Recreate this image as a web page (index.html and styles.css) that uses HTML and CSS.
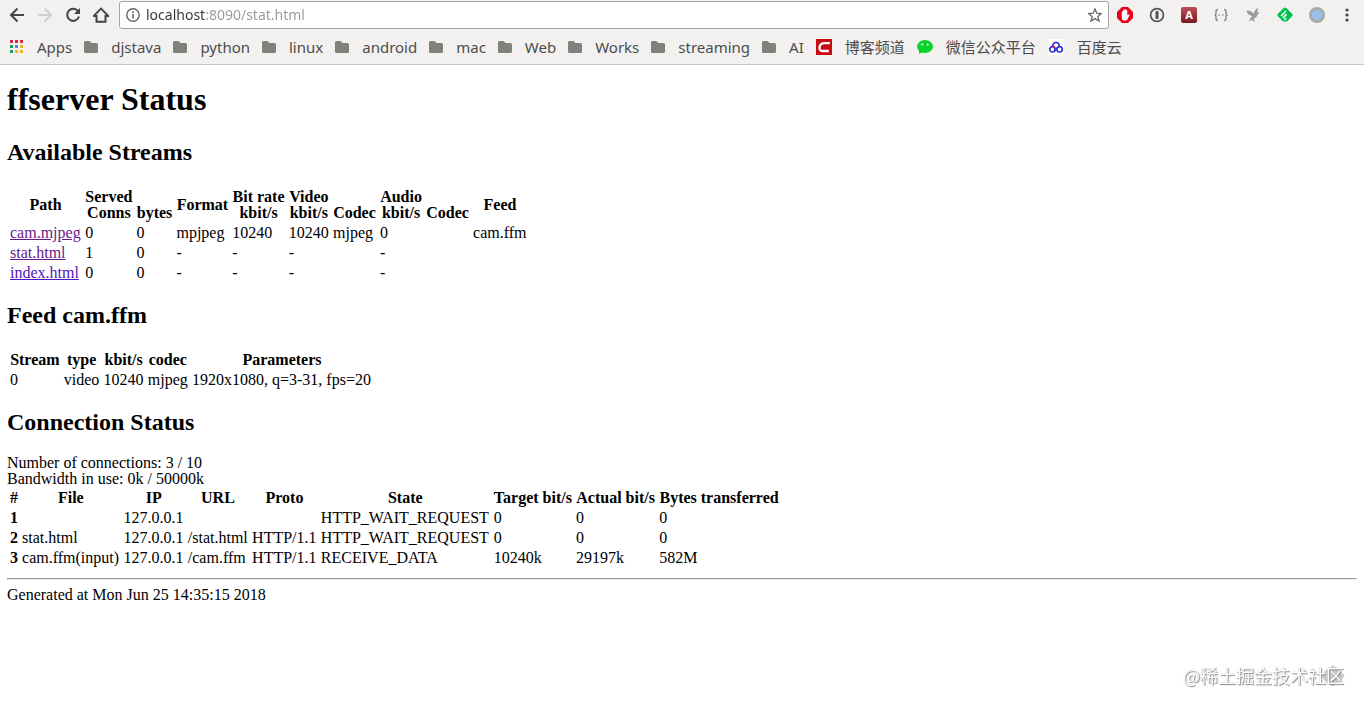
FILE: index.html
```html
<!DOCTYPE html>
<html lang="en">
<head>
    <meta charset="UTF-8">
    <title>ffserver Status</title>
    <link rel="stylesheet" href="styles.css">
</head>
<body>
    <svg class="symbols" aria-hidden="true">
        <symbol id="folder" viewBox="0 0 14 12">
            <path d="M1.500 0H5.500L7.500 2H12.500Q14 2 14 3.500V10.500Q14 12 12.500 12H1.500Q0 12 0 10.500V1.500Q0 0 1.500 0Z" fill="#82807d"/>
        </symbol>
    </svg>

    <header class="browser">
        <div class="toolbar">
            <nav class="nav-buttons">
                <button type="button" aria-label="Back">
                    <svg width="16" height="16" viewBox="0 0 16 16" fill="none" stroke="#454545" stroke-width="2"><path d="M15 8H2M8.500 1.500L2 8L8.500 14.500"/></svg>
                </button>
                <button type="button" aria-label="Forward">
                    <svg width="16" height="16" viewBox="0 0 16 16" fill="none" stroke="#cfcfce" stroke-width="2"><path d="M1 8H14M7.500 1.500L14 8L7.500 14.500"/></svg>
                </button>
                <button type="button" aria-label="Reload">
                    <svg width="16" height="16" viewBox="0 0 16 16"><path d="M13 4.200A6 6 0 1 0 14 9.500" fill="none" stroke="#454545" stroke-width="2"/><path d="M15 1V7H9Z" fill="#454545"/></svg>
                </button>
                <button type="button" aria-label="Home">
                    <svg width="16" height="16" viewBox="0 0 16 16" fill="none" stroke="#454545" stroke-width="2"><path d="M.6 9H3.500V14.800H12.500V9H15.400L8 1.600Z"/></svg>
                </button>
            </nav>

            <div class="address">
                <svg width="14" height="14" viewBox="0 0 14 14"><circle cx="7" cy="7" r="6.200" fill="none" stroke="#666" stroke-width="1.400"/><path d="M7 6V10.500M7 3.300V4.900" stroke="#666" stroke-width="1.600"/></svg>
                <input type="text" class="url" aria-label="Address" value="localhost:8090/stat.html">
                <button type="button" aria-label="Bookmark this page">
                    <svg width="14" height="14" viewBox="0 0 14 14"><path d="M7 1L8.800 5.200L13.300 5.500L9.900 8.500L11 13L7 10.600L3 13L4.100 8.500L.7 5.500L5.200 5.200Z" fill="none" stroke="#666" stroke-width="1.300"/></svg>
                </button>
            </div>

            <div class="extensions">
                <button type="button" aria-label="Ad blocker">
                    <svg width="16" height="16" viewBox="0 0 16 16"><path d="M5 0H11L16 5V11L11 16H5L0 11V5Z" fill="#e8001a"/><path d="M4.800 8V4.500Q5.500 3.800 6.100 4.500V3Q6.800 2.200 7.500 3V2.400Q8.200 1.700 8.900 2.400V3.200Q9.600 2.500 10.300 3.200V8.500L11.800 7.300Q12.700 7.400 12.500 8.200L10.300 12.500Q9.700 13.500 8.500 13.500H7Q4.800 13.500 4.800 11Z" fill="#fff"/></svg>
                </button>
                <button type="button" aria-label="Password manager">
                    <svg width="16" height="16" viewBox="0 0 16 16"><circle cx="8" cy="8" r="6.400" fill="none" stroke="#555" stroke-width="1.700"/><rect x="6.500" y="4" width="3" height="8" rx="1" fill="#555"/></svg>
                </button>
                <button type="button" class="ext-a">A</button>
                <button type="button" aria-label="JSON formatter">
                    <svg width="16" height="16" viewBox="0 0 16 16"><path d="M5 2.500Q3 2.500 3 4.500V6.500Q3 8 1.500 8Q3 8 3 9.500V11.500Q3 13.500 5 13.500M11 2.500Q13 2.500 13 4.500V6.500Q13 8 14.500 8Q13 8 13 9.500V11.500Q13 13.500 11 13.500" fill="none" stroke="#888" stroke-width="1.400"/><path d="M5.500 8h1.500M9 8h1.500" stroke="#999" stroke-width="1.400"/></svg>
                </button>
                <button type="button" aria-label="Bird">
                    <svg width="16" height="16" viewBox="0 0 16 16"><path d="M1.500 3.500Q6 3.200 8.500 6.500Q9.500 3 13 .5Q12.300 3.500 12.500 5.500L15 5.800L12.500 7.500Q11.800 11 8.500 11.800L10 15L6.500 13L3.500 14.500L5.500 11Q7 10 7 9Q2.500 8 1.500 3.500Z" fill="#9b9b9b"/></svg>
                </button>
                <button type="button" aria-label="Reader">
                    <svg width="16" height="16" viewBox="0 0 16 16"><path d="M8 .5Q8.700 .5 9.300 1L15.300 7Q16 8 15.300 9L11 13.500Q10 14.500 9 14.500H7Q6 14.500 5 13.500L.7 9Q0 8 .7 7L6.700 1Q7.300 .5 8 .5Z" fill="#00c24e"/><path d="M4.500 8.500L8.500 4.500M6.300 10.500L9 7.800M8 12.300L8.600 11.700" stroke="#fff" stroke-width="1.700" stroke-linecap="round"/></svg>
                </button>
                <button type="button" aria-label="Recorder">
                    <svg width="16" height="16" viewBox="0 0 16 16"><circle cx="8" cy="8" r="8" fill="#aaa"/><circle cx="8" cy="8" r="5" fill="#94c1ed"/></svg>
                </button>
                <button type="button" aria-label="Menu">
                    <svg width="16" height="16" viewBox="0 0 16 16" fill="#454545"><circle cx="6" cy="3" r="1.600"/><circle cx="6" cy="8" r="1.600"/><circle cx="6" cy="13" r="1.600"/></svg>
                </button>
            </div>
        </div>

        <nav class="bookmarks">
            <a href="#">
                <svg width="14" height="14" viewBox="0 0 14 14"><path d="M0 0h3v3H0zM5 0h3v3H5zM10 0h3v3h-3z" fill="#d9273d"/><path d="M0 5h3v3H0zM0 10h3v3H0z" fill="#17a05d"/><path d="M5 5h3v3H5z" fill="#4285f4"/><path d="M5 10h3v3H5zM10 5h3v3h-3zM10 10h3v3h-3z" fill="#f0b51f"/></svg>
                Apps
            </a>
            <a href="#"><svg width="14" height="12"><use href="#folder"/></svg>djstava</a>
            <a href="#"><svg width="14" height="12"><use href="#folder"/></svg>python</a>
            <a href="#"><svg width="14" height="12"><use href="#folder"/></svg>linux</a>
            <a href="#"><svg width="14" height="12"><use href="#folder"/></svg>android</a>
            <a href="#"><svg width="14" height="12"><use href="#folder"/></svg>mac</a>
            <a href="#"><svg width="14" height="12"><use href="#folder"/></svg>Web</a>
            <a href="#"><svg width="14" height="12"><use href="#folder"/></svg>Works</a>
            <a href="#"><svg width="14" height="12"><use href="#folder"/></svg>streaming</a>
            <a href="#"><svg width="14" height="12"><use href="#folder"/></svg>AI</a>
            <a href="#">
                <svg width="16" height="16" viewBox="0 0 16 16"><rect width="16" height="16" fill="#c80b10"/><path d="M13.800 4.200H9Q4 4.200 3.500 8.500Q3.300 12 6.500 12H12.800" fill="none" stroke="#fff" stroke-width="2.300"/></svg>
                博客频道
            </a>
            <a href="#">
                <svg width="16" height="16" viewBox="0 0 16 16"><ellipse cx="8" cy="7.500" rx="8" ry="6.500" fill="#09d32c"/><path d="M2 11L2 15L6 13Z" fill="#09d32c"/><circle cx="5.300" cy="5.500" r="1" fill="#fff"/><circle cx="10.700" cy="5.500" r="1" fill="#fff"/></svg>
                微信公众平台
            </a>
            <a href="#">
                <svg width="16" height="16" viewBox="0 0 16 16"><rect width="16" height="16" fill="#fff"/><g fill="none" stroke="#3535dd" stroke-width="1.700"><path d="M5 7.200A3.100 3.100 0 1 1 11 7.200"/><circle cx="4.400" cy="10.300" r="2.700"/><circle cx="11.600" cy="10.300" r="2.700"/><path d="M6.300 12.200L9.800 8.300"/></g><circle cx="6.300" cy="7.800" r="1" fill="#e33"/></svg>
                百度云
            </a>
        </nav>
    </header>

    <main>
        <h1>ffserver Status</h1>

        <h2>Available Streams</h2>
        <table class="streams">
            <tr>
                <th>Path</th>
                <th>Served<br>Conns</th>
                <th><br>bytes</th>
                <th>Format</th>
                <th>Bit rate<br>kbit/s</th>
                <th>Video<br>kbit/s</th>
                <th><br>Codec</th>
                <th>Audio<br>kbit/s</th>
                <th><br>Codec</th>
                <th>Feed</th>
            </tr>
            <tr>
                <td><a href="#">cam.mjpeg</a></td>
                <td>0</td>
                <td>0</td>
                <td>mpjpeg</td>
                <td>10240</td>
                <td>10240</td>
                <td>mjpeg</td>
                <td>0</td>
                <td></td>
                <td>cam.ffm</td>
            </tr>
            <tr>
                <td><a href="#">stat.html</a></td>
                <td>1</td>
                <td>0</td>
                <td>-</td>
                <td>-</td>
                <td>-</td>
                <td></td>
                <td>-</td>
                <td></td>
                <td></td>
            </tr>
            <tr>
                <td><a href="#" class="recent">index.html</a></td>
                <td>0</td>
                <td>0</td>
                <td>-</td>
                <td>-</td>
                <td>-</td>
                <td></td>
                <td>-</td>
                <td></td>
                <td></td>
            </tr>
        </table>

        <h2>Feed cam.ffm</h2>
        <table class="feed">
            <tr>
                <th>Stream</th>
                <th>type</th>
                <th>kbit/s</th>
                <th>codec</th>
                <th>Parameters</th>
            </tr>
            <tr>
                <td>0</td>
                <td>video</td>
                <td>10240</td>
                <td>mjpeg</td>
                <td>1920x1080, q=3-31, fps=20</td>
            </tr>
        </table>

        <h2 class="status-title">Connection Status</h2>
        Number of connections: 3 / 10<br>
        Bandwidth in use: 0k / 50000k<br>
        <table class="connections">
            <tr>
                <th>#</th>
                <th>File</th>
                <th>IP</th>
                <th>URL</th>
                <th>Proto</th>
                <th>State</th>
                <th>Target bit/s</th>
                <th>Actual bit/s</th>
                <th>Bytes transferred</th>
            </tr>
            <tr>
                <td><b>1</b></td>
                <td></td>
                <td>127.0.0.1</td>
                <td></td>
                <td></td>
                <td>HTTP_WAIT_REQUEST</td>
                <td>0</td>
                <td>0</td>
                <td>0</td>
            </tr>
            <tr>
                <td><b>2</b></td>
                <td>stat.html</td>
                <td>127.0.0.1</td>
                <td>/stat.html</td>
                <td>HTTP/1.1</td>
                <td>HTTP_WAIT_REQUEST</td>
                <td>0</td>
                <td>0</td>
                <td>0</td>
            </tr>
            <tr>
                <td><b>3</b></td>
                <td>cam.ffm(input)</td>
                <td>127.0.0.1</td>
                <td>/cam.ffm</td>
                <td>HTTP/1.1</td>
                <td>RECEIVE_DATA</td>
                <td>10240k</td>
                <td>29197k</td>
                <td>582M</td>
            </tr>
        </table>
        <hr>
        Generated at Mon Jun 25 14:35:15 2018
    </main>

    <div class="watermark">
        <svg width="24" height="22" viewBox="0 0 24 22"><path d="M8 3L12 .5L16 3L20 6L23.500 11L20 16L16 19L12 21.500L8 19L4 16L.5 11L4 6Z" fill="#c8c8c8"/></svg>
        <span>@稀土掘金技术社区</span>
    </div>
</body>
</html>
```
FILE: styles.css
```css
body {
    margin: 0;
    background-color: #fff;
    color: #000;
    font: 16px/16px "Liberation Serif", "Times New Roman", serif;
}
.symbols {
    display: none;
}

/* browser bar */
.browser {
    background-color: #f2f1f0;
    border-bottom: 1px solid #c8c7c6;
    font: 14px/20px "Noto Sans", "Noto Sans CJK SC", sans-serif;
    color: #4c4c4c;
}
.browser svg {
    display: block;
    flex: none;
}
.browser button {
    display: flex;
    align-items: center;
    justify-content: center;
    width: 16px;
    height: 16px;
    padding: 0;
    border: 0;
    background: none;
}
.toolbar {
    display: flex;
    align-items: center;
    padding: 1px 7px 0 9px;
}
.nav-buttons {
    display: flex;
    gap: 12px;
    margin-right: 10px;
}
.address {
    display: flex;
    flex: 1;
    align-items: center;
    gap: 6px;
    height: 26px;
    padding: 0 5px 0 6px;
    border: 1px solid #a5a4a3;
    border-radius: 3px;
    background-color: #fff;
}
.url {
    flex: 1;
    padding: 0;
    border: 0;
    outline: 0;
    font: inherit;
    /* host part dark, the rest grey */
    background: linear-gradient(90deg, #333 60px, #999 60px);
    -webkit-background-clip: text;
    background-clip: text;
    color: transparent;
}
.extensions {
    display: flex;
    gap: 16px;
    margin-left: 8px;
}
.browser .ext-a {
    border-radius: 2px;
    background: linear-gradient(#b9505a, #7a1724);
    color: #fff;
    font: bold 11px/16px "Noto Sans", sans-serif;
}
.bookmarks {
    display: flex;
    gap: 12px;
    padding: 8px 10px 7px;
    font-size: 15px;
}
.bookmarks a {
    display: flex;
    align-items: center;
    gap: 13px;
    color: inherit;
    text-decoration: none;
    white-space: nowrap;
}

/* status page */
main {
    padding: 0 7px;
}
h1 {
    margin: 18px 0 25px;
    font-size: 32px;
    line-height: 32px;
}
h2 {
    margin: 19px 0 22px;
    font-size: 24px;
    line-height: 24px;
}
.status-title {
    margin-bottom: 21px;
}
table {
    border-spacing: 2px;
}
.streams {
    width: 523px;
}
.feed {
    width: 368px;
}
.connections {
    width: 775px;
}
th, td {
    padding: 1px;
    white-space: nowrap;
}
td a {
    color: #6a1a8b;
}
td a.recent {
    color: #5014c0;
}
hr {
    margin: 9px 0 7px;
}

.watermark {
    position: fixed;
    right: 20px;
    bottom: 22px;
    color: #fff;
    font: 18px/22px "Noto Sans CJK SC", sans-serif;
    text-shadow: 1px 1px 1px #888, 0 0 1px #aaa;
}
.watermark svg {
    position: absolute;
    right: -1px;
    top: 1px;
}
.watermark span {
    position: relative;
}
```
